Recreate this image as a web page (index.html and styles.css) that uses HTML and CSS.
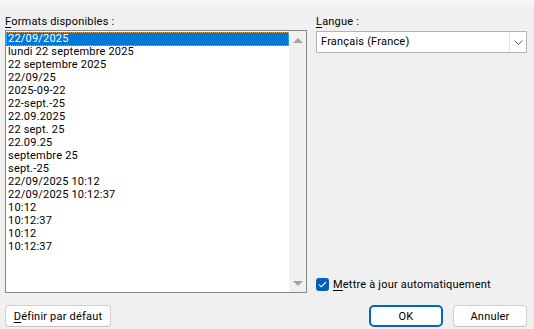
FILE: index.html
```html
<!doctype html>
<html>
<head>
    <meta charset="utf-8">
    <title>Date et heure</title>
    <link rel="stylesheet" href="styles.css">
</head>
<body class="dlg-body">
    <div class="dlg-top"></div>

    <div class="dlg-main">
        <div class="dlg-col">
            <p class="dlg-label"><u>F</u>ormats disponibles :</p>
            <div class="format-list">
                <ul class="format-items">
                    <li class="format-item selected">22/09/2025</li>
                    <li class="format-item">lundi 22 septembre 2025</li>
                    <li class="format-item">22 septembre 2025</li>
                    <li class="format-item">22/09/25</li>
                    <li class="format-item">2025-09-22</li>
                    <li class="format-item">22-sept.-25</li>
                    <li class="format-item">22.09.2025</li>
                    <li class="format-item">22 sept. 25</li>
                    <li class="format-item">22.09.25</li>
                    <li class="format-item">septembre 25</li>
                    <li class="format-item">sept.-25</li>
                    <li class="format-item">22/09/2025 10:12</li>
                    <li class="format-item">22/09/2025 10:12:37</li>
                    <li class="format-item">10:12</li>
                    <li class="format-item">10:12:37</li>
                    <li class="format-item">10:12</li>
                    <li class="format-item">10:12:37</li>
                </ul>
                <div class="scrollbar">
                    <span class="arrow arrow-up"></span>
                    <span class="arrow arrow-down"></span>
                </div>
            </div>
        </div>

        <div class="dlg-col dlg-side">
            <p class="dlg-label"><u>L</u>angue :</p>
            <div class="combo">
                <span class="combo-value">Français (France)</span>
                <span class="combo-btn">
                    <svg width="9" height="5" viewBox="0 0 9 5"><path d="M0.5 0.5 L4.5 4.5 L8.5 0.5" fill="none" stroke="#606060" stroke-width="1"/></svg>
                </span>
            </div>
            <label class="check-row">
                <span class="check-box">
                    <svg width="9" height="7" viewBox="0 0 9 7"><path d="M1 3.6 L3.3 5.8 L8 1" fill="none" stroke="#fff" stroke-width="1.1"/></svg>
                </span>
                <span><u>M</u>ettre à jour automatiquement</span>
            </label>
        </div>
    </div>

    <div class="dlg-buttons">
        <button class="dlg-btn btn-default"><u>D</u>éfinir par défaut</button>
        <div class="btn-group">
            <button class="dlg-btn btn-ok">OK</button>
            <button class="dlg-btn btn-cancel">Annuler</button>
        </div>
    </div>
</body>
</html>
```

FILE: styles.css
```css
.dlg-body {
    margin: 0;
    background: #f0f0f0;
    font-family: "Roboto", "Noto Sans", sans-serif;
    font-size: 11px;
    letter-spacing: 0.2px;
    color: #000;
    width: 534px;
    height: 329px;
    overflow: hidden;
}

.dlg-top {
    height: 6px;
    background: #f4f5f7;
}

.dlg-main {
    display: grid;
    grid-template-columns: 302px 211px;
    column-gap: 9px;
    padding: 0 0 0 5px;
}

.dlg-col {
    display: flex;
    flex-direction: column;
}

.dlg-label {
    margin: 0;
    height: 24px;
    line-height: 16px;
    padding-top: 8px;
    box-sizing: border-box;
}

.dlg-label u, .check-row u, .dlg-btn u {
    text-decoration-thickness: 1px;
    text-underline-offset: 2px;
}

.format-list {
    display: flex;
    height: 263px;
    border: 1px solid #828790;
    background: #fff;
    box-sizing: border-box;
}

.format-items {
    flex: 1;
    list-style: none;
    margin: 0;
    padding: 1px 0 0 0;
}

.format-item {
    height: 13px;
    line-height: 13px;
    padding-left: 2px;
    white-space: nowrap;
}

.format-item.selected {
    background: #0078d7;
    color: #fff;
    outline: 1px dotted #e8a040;
    outline-offset: -1px;
    height: 14px;
    margin-bottom: -1px;
}

.scrollbar {
    width: 17px;
    background: #f0f0f0;
    display: flex;
    flex-direction: column;
    justify-content: space-between;
    align-items: center;
    padding: 7px 0 6px;
}

.arrow {
    width: 0;
    height: 0;
    border-left: 5px solid transparent;
    border-right: 5px solid transparent;
}

.arrow-up {
    border-bottom: 5px solid #a3a3a3;
}

.arrow-down {
    border-top: 5px solid #a3a3a3;
}

.combo {
    display: flex;
    height: 22px;
    border: 1px solid #b4b4b4;
    background: #fff;
    box-sizing: border-box;
    margin-top: 1px;
}

.combo-value {
    flex: 1;
    padding-left: 4px;
    line-height: 20px;
}

.combo-btn {
    width: 16px;
    border-left: 1px solid #e3e3e3;
    display: flex;
    align-items: center;
    justify-content: center;
}

.check-row {
    margin-top: auto;
    margin-bottom: 2px;
    display: flex;
    align-items: center;
    gap: 4px;
    height: 13px;
}

.check-box {
    width: 13px;
    height: 13px;
    border-radius: 3px;
    background: #005fb8;
    display: flex;
    align-items: center;
    justify-content: center;
}

.dlg-buttons {
    display: flex;
    justify-content: space-between;
    padding: 12px 7px 0 5px;
}

.btn-group {
    display: flex;
    gap: 10px;
}

.dlg-btn {
    font: inherit;
    letter-spacing: inherit;
    height: 22px;
    padding: 0;
    background: #fdfdfd;
    border: 1px solid #d0d0d0;
    border-bottom-color: #c0c0c0;
    border-radius: 4px;
    color: #000;
}

.btn-default {
    width: 106px;
}

.btn-ok {
    width: 74px;
    border: 2px solid #0067c0;
    border-radius: 5px;
}

.btn-cancel {
    width: 74px;
}
```
